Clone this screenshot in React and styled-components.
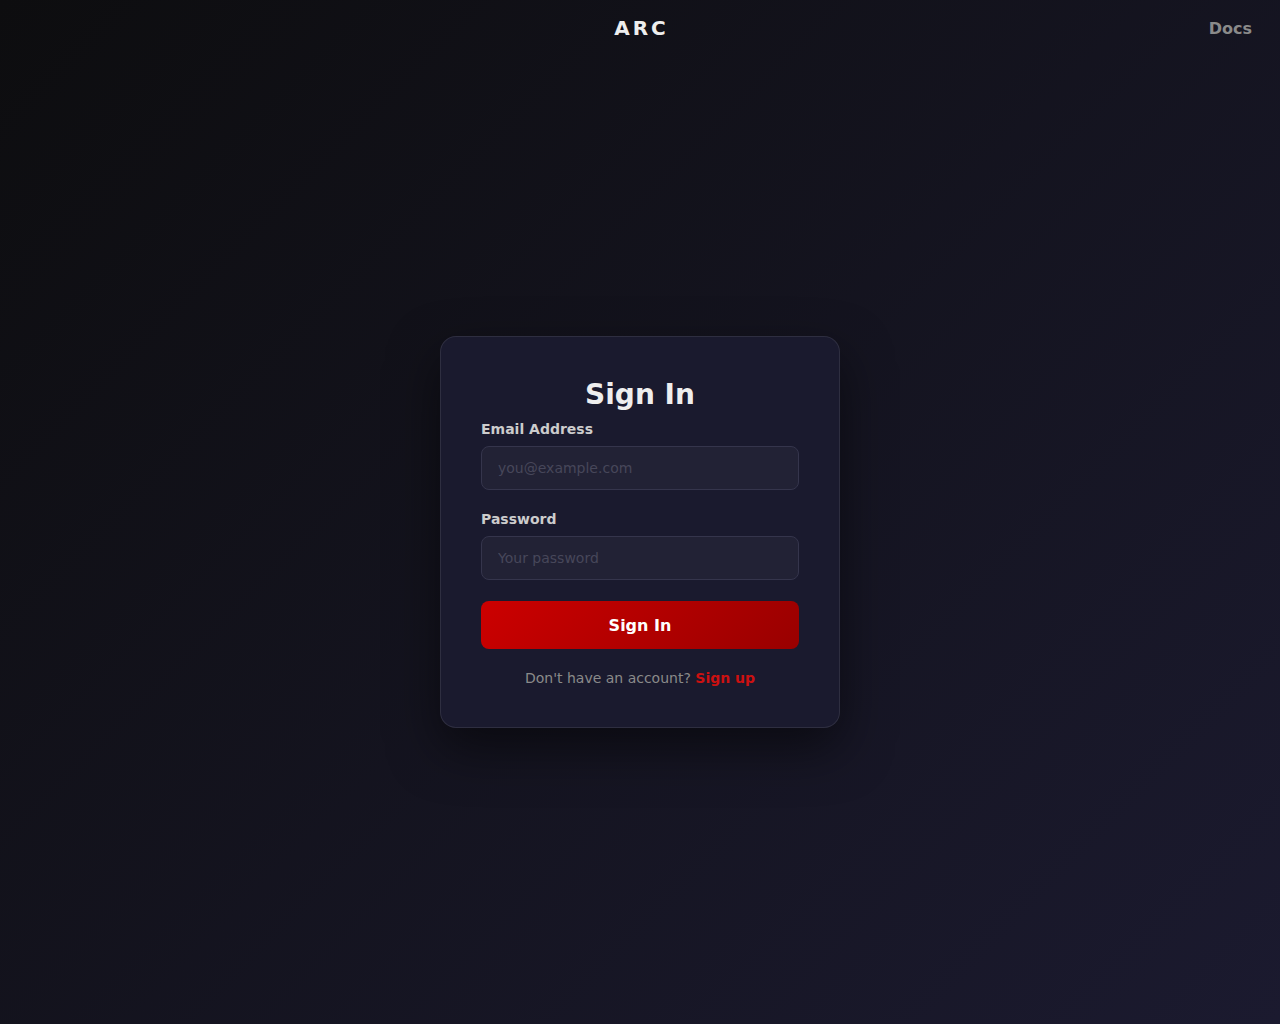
import React, { useState } from 'react';
import styled, { createGlobalStyle } from 'styled-components';

const GlobalStyle = createGlobalStyle`
    * {
        box-sizing: border-box;
    }
    body {
        margin: 0;
        font-family: "DejaVu Sans", Verdana, sans-serif;
        background: linear-gradient(135deg, #0d0d0f 0%, #1b1a2f 100%);
        min-height: 100vh;
        color: #eee;
    }
`

const Page = styled.div`
    min-height: 100vh;
    display: flex;
    flex-direction: column;
`

const Header = styled.header`
    height: 40px;
    padding: 16px 28px 0;
    display: grid;
    grid-template-columns: 1fr auto 1fr;
    align-items: start;
`

const Logo = styled.div`
    grid-column: 2;
    font-size: 20px;
    font-weight: bold;
    letter-spacing: 3px;
    margin-right: -3px;
    color: #eeeeee;
`

const NavLink = styled.a`
    justify-self: end;
    font-size: 16px;
    font-weight: bold;
    color: #8a8a8a;
    text-decoration: none;
    margin-top: 3px;
    cursor: pointer;
`

const Main = styled.main`
    flex: 1;
    display: flex;
    align-items: center;
    justify-content: center;
`

const Card = styled.form`
    width: 400px;
    padding: 41px 40px 41px;
    background: #1a1a2e;
    border: 1px solid rgba(255, 255, 255, 0.09);
    border-radius: 16px;
    box-shadow: 0 20px 50px rgba(0, 0, 0, 0.5);
`

const Title = styled.h1`
    margin: 0 0 10px;
    text-align: center;
    font-size: 28px;
    font-weight: bold;
    color: #eeeeee;
`

const Field = styled.div`
    margin-bottom: 21px;
`

const Label = styled.label`
    display: block;
    margin-bottom: 9px;
    font-size: 14px;
    font-weight: bold;
    color: #cccccc;
`

const Input = styled.input`
    width: 100%;
    height: 44px;
    padding: 0 16px;
    background: #222235;
    border: 1px solid #35354c;
    border-radius: 8px;
    color: #eee;
    font-family: inherit;
    font-size: 14px;
    outline: none;
    &::placeholder {
        color: #47475a;
    }
`

const Button = styled.button`
    width: 100%;
    height: 48px;
    border: none;
    border-radius: 8px;
    background: linear-gradient(135deg, #cc0000 0%, #990000 100%);
    color: #fff;
    font-family: inherit;
    font-size: 16px;
    font-weight: bold;
    cursor: pointer;
`

const Footer = styled.p`
    margin: 21px 0 0;
    text-align: center;
    font-size: 14px;
    color: #8a8a8a;
    a {
        color: #cc1111;
        font-weight: bold;
        text-decoration: none;
    }
`

const App = () => {
    const [email, setEmail] = useState('');
    const [password, setPassword] = useState('');

    return (
        <Page>
            <GlobalStyle />
            <Header>
                <Logo>ARC</Logo>
                <NavLink>Docs</NavLink>
            </Header>
            <Main>
                <Card onSubmit={e => e.preventDefault()}>
                    <Title>Sign In</Title>
                    <Field>
                        <Label htmlFor="email">Email Address</Label>
                        <Input id="email" type="email" placeholder="you@example.com"
                            value={email} onChange={e => setEmail(e.target.value)} />
                    </Field>
                    <Field>
                        <Label htmlFor="password">Password</Label>
                        <Input id="password" type="password" placeholder="Your password"
                            value={password} onChange={e => setPassword(e.target.value)} />
                    </Field>
                    <Button type="submit">Sign In</Button>
                    <Footer>Don't have an account? <a href="#">Sign up</a></Footer>
                </Card>
            </Main>
        </Page>
    );
}

export default App;
